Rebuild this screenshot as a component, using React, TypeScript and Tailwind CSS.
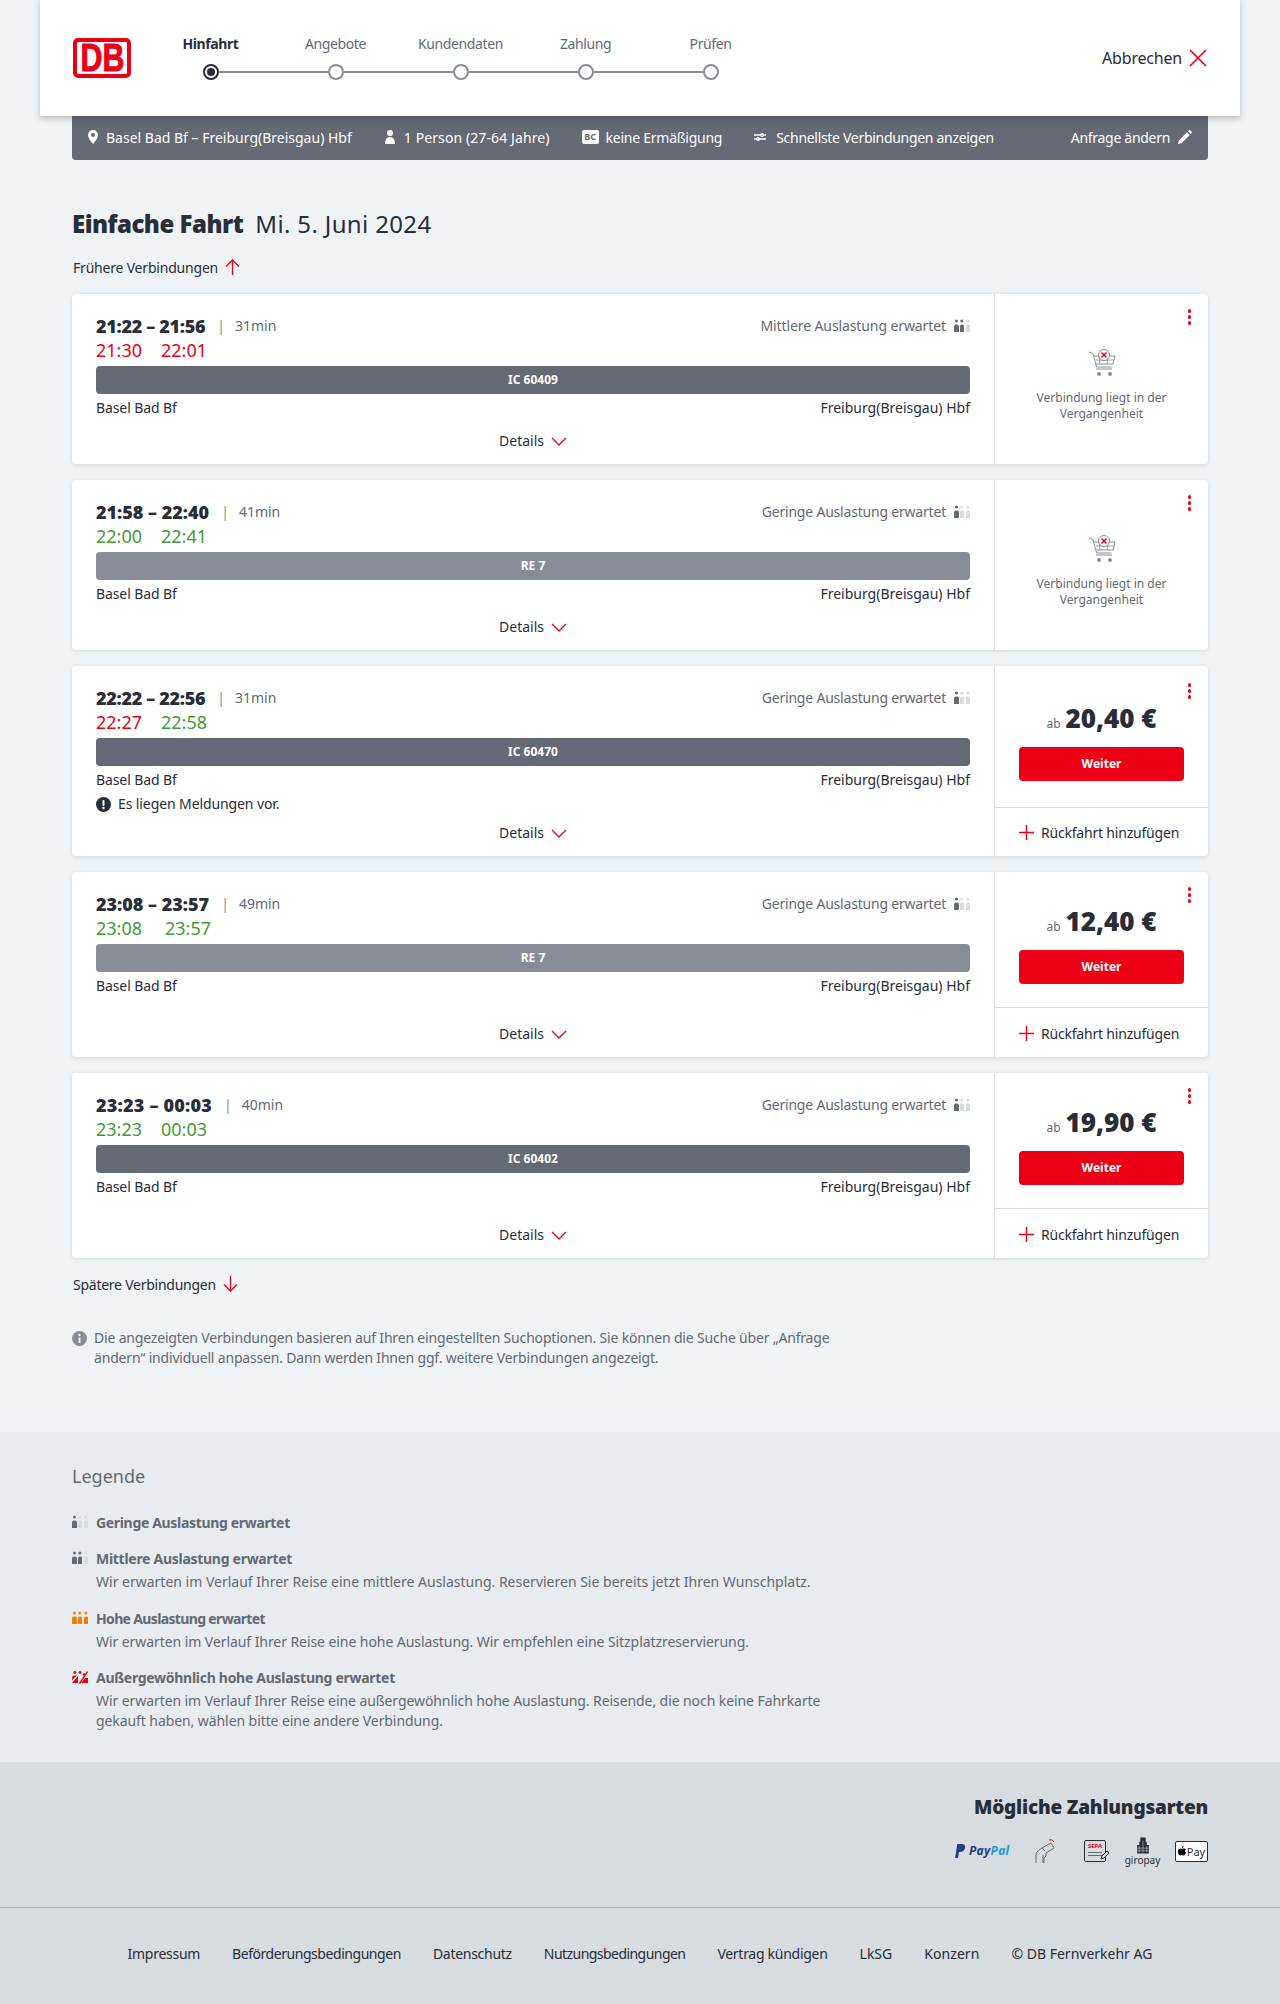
import React from "react";

const RED = "#ec0016";

function Occ({ level }: { level: 1 | 2 | 3 | 4 }) {
  const on = level === 3 ? "#f27e00" : "#646973";
  const off = "#d7dce1";
  const fills = level === 1 ? [on, off, off] : level === 2 ? [on, on, off] : [on, on, on];
  if (level === 4) {
    return (
      <svg width="16" height="14" viewBox="0 0 16 14" className="shrink-0">
        <circle cx="2.8" cy="2.5" r="1.4" fill={RED} />
        <path d="M0 13V8a2.5 2.5 0 0 1 2.500-2.500H5L0 10z M0 13l6-7 0 7z" fill={RED} />
        <path d="M7 13l8-12 1 1-8 12z" fill={RED} />
        <circle cx="8" cy="2.500" r="1.4" fill={RED} />
        <path d="M9 13l4-5h3v5z M12 6a1.4 1.4 0 1 1 .1 0z" fill={RED} />
      </svg>
    );
  }
  return (
    <svg width="16" height="14" viewBox="0 0 16 14" className="shrink-0">
      {[0, 6, 12].map((x, i) => (
        <g key={x} fill={fills[i]}>
          <circle cx={x + (i === 0 ? 2.5 : 1.8)} cy="2" r="1.5" />
          <path d={i === 0 ? "M0 13V7.5A2 2 0 0 1 2 5.5h1a2 2 0 0 1 2 2V13z" : `M${x} 13V7a1.5 1.5 0 0 1 1.5-1.5h1A1.5 1.5 0 0 1 ${x + 4} 7v6z`} />
        </g>
      ))}
    </svg>
  );
}

function Cart() {
  return (
    <svg width="28" height="28" viewBox="0 0 28 28" fill="none">
      <path d="M1 3l4 1.5 3.5 13.5h15" stroke="#878c96" strokeWidth="1" />
      <path d="M6 7h21l-2 8H8" stroke="#878c96" strokeWidth="1" />
      <path d="M8 11h18M11 7l1 8M20 7l-1 8" stroke="#878c96" strokeWidth="0.8" />
      <circle cx="16" cy="6" r="5.5" fill="#fff" stroke="#878c96" strokeWidth="1" />
      <path d="M13.5 3.5l5 5m0-5l-5 5" stroke={RED} strokeWidth="1.5" />
      <path d="M8 20h16" stroke="#afb4bb" strokeWidth="1.5" />
      <circle cx="11" cy="25" r="2" fill="#878c96" />
      <circle cx="22" cy="25" r="2" fill="#878c96" />
    </svg>
  );
}

function Chevron() {
  return (
    <svg width="16" height="9" viewBox="0 0 16 9" fill="none">
      <path d="M1 1l7 7 7-7" stroke={RED} strokeWidth="1.3" />
    </svg>
  );
}

function Dots({ top }: { top: string }) {
  return (
    <div className={`absolute right-[17px] ${top} flex flex-col gap-[2.5px]`}>
      <span className="w-[3.5px] h-[3.5px] rounded-full bg-[#ec0016]" />
      <span className="w-[3.5px] h-[3.5px] rounded-full bg-[#ec0016]" />
      <span className="w-[3.5px] h-[3.5px] rounded-full bg-[#ec0016]" />
    </div>
  );
}

type Conn = {
  time: string;
  track: string;
  dur: string;
  d1: string;
  d2: string;
  c1: string;
  c2: string;
  gap: string;
  load: string;
  loadTrack: string;
  level: 1 | 2;
  train: string;
  bar: string;
  msg?: boolean;
  price?: string;
  h: string;
  topH: string;
  btn: string;
  dots: string;
};

const conns: Conn[] = [
  { time: "21:22 – 21:56", track: "tracking-[-0.3px]", dur: "31min", d1: "21:30", d2: "22:01", c1: "text-[#ec0016]", c2: "text-[#ec0016]", gap: "gap-[19px]", load: "Mittlere Auslastung erwartet", loadTrack: "tracking-[-0.1px]", level: 2, train: "IC 60409", bar: "bg-[#646973]", h: "h-[170px]", topH: "", btn: "", dots: "top-[15px]" },
  { time: "21:58 – 22:40", track: "tracking-[0px]", dur: "41min", d1: "22:00", d2: "22:41", c1: "text-[#3f9c35]", c2: "text-[#3f9c35]", gap: "gap-[19px]", load: "Geringe Auslastung erwartet", loadTrack: "tracking-[-0.2px]", level: 1, train: "RE 7", bar: "bg-[#878c96]", h: "h-[170px]", topH: "", btn: "", dots: "top-[15px]" },
  { time: "22:22 – 22:56", track: "tracking-[-0.3px]", dur: "31min", d1: "22:27", d2: "22:58", c1: "text-[#ec0016]", c2: "text-[#3f9c35]", gap: "gap-[19px]", load: "Geringe Auslastung erwartet", loadTrack: "tracking-[-0.2px]", level: 1, train: "IC 60470", bar: "bg-[#646973]", msg: true, price: "20,40 €", h: "h-[190px]", topH: "h-[142px] pt-[34px]", btn: "mt-[11px]", dots: "top-[17px]" },
  { time: "23:08 – 23:57", track: "tracking-[0px]", dur: "49min", d1: "23:08", d2: "23:57", c1: "text-[#3f9c35]", c2: "text-[#3f9c35]", gap: "gap-[23px]", load: "Geringe Auslastung erwartet", loadTrack: "tracking-[-0.2px]", level: 1, train: "RE 7", bar: "bg-[#878c96]", price: "12,40 €", h: "h-[185px]", topH: "h-[136px] pt-[31px]", btn: "mt-[11px]", dots: "top-[15px]" },
  { time: "23:23 – 00:03", track: "tracking-[0.22px]", dur: "40min", d1: "23:23", d2: "00:03", c1: "text-[#3f9c35]", c2: "text-[#3f9c35]", gap: "gap-[19px]", load: "Geringe Auslastung erwartet", loadTrack: "tracking-[-0.2px]", level: 1, train: "IC 60402", bar: "bg-[#646973]", price: "19,90 €", h: "h-[185px]", topH: "h-[136px] pt-[31px]", btn: "mt-[11px]", dots: "top-[15px]" },
];

function Card({ c }: { c: Conn }) {
  return (
    <div className={`flex ${c.h} bg-white rounded shadow-[0_1px_4px_rgba(40,45,55,0.15)]`}>
      <div className="flex-1 flex flex-col px-6 pt-[20px] pb-[13px] border-r border-[#d7dce1]">
        <div className="flex items-center justify-between h-[24px]">
          <div className="flex items-center gap-[14px]">
            <span className={`text-[18px] font-black ${c.track} text-[#282d37]`}>{c.time}</span>
            <span className="text-[14px] text-[#878c96] ml-[-2px] mt-[-1px]">|</span>
            <span className="text-[14px] text-[#646973] ml-[-4px] mt-[-1px]">{c.dur}</span>
          </div>
          <div className={`flex items-center gap-[8px] text-[14px] ${c.loadTrack} text-[#646973]`}>
            <span className="mt-[-1px]">{c.load}</span>
            <Occ level={c.level} />
          </div>
        </div>
        <div className={`flex ${c.gap} text-[18px] leading-[24px]`}>
          <span className={c.c1}>{c.d1}</span>
          <span className={c.c2}>{c.d2}</span>
        </div>
        <div className={`${c.bar} h-[28px] rounded mt-[4px] flex items-center justify-center text-white text-[12px] font-bold`}>
          {c.train}
        </div>
        <div className="flex justify-between text-[14px] leading-[20px] mt-[4px] text-[#282d37]">
          <span className="tracking-[-0.1px]">Basel Bad Bf</span>
          <span>Freiburg(Breisgau) Hbf</span>
        </div>
        {c.msg && (
          <div className="flex items-center gap-[7px] text-[14px] leading-[20px] mt-[4px] text-[#282d37] tracking-[-0.1px]">
            <svg width="15" height="15" viewBox="0 0 15 15">
              <circle cx="7.5" cy="7.5" r="7.5" fill="#282d37" />
              <rect x="6.5" y="3" width="2" height="6" rx="1" fill="#fff" />
              <circle cx="7.5" cy="11" r="1.2" fill="#fff" />
            </svg>
            Es liegen Meldungen vor.
          </div>
        )}
        <div className="mt-auto flex items-center justify-center gap-[7px] text-[14px] leading-[20px] text-[#282d37]">
          Details
          <Chevron />
        </div>
      </div>
      <div className="w-[213px] relative flex flex-col shrink-0">
        <Dots top={c.dots} />
        {c.price ? (
          <>
            <div className={`${c.topH} px-[24px] border-b border-[#d7dce1]`}>
              <div className="flex items-baseline justify-center gap-[5px] h-[36px]">
                <span className="text-[12px] text-[#646973]">ab</span>
                <span className="text-[26px] leading-[36px] font-black text-[#282d37]">{c.price}</span>
              </div>
              <div className={`${c.btn} h-[34px] bg-[#ec0016] rounded flex items-center justify-center text-white text-[12px] font-bold`}>
                Weiter
              </div>
            </div>
            <div className="flex-1 flex items-center pl-[24px] gap-[7px] pt-[1px] text-[14px] tracking-[-0.2px] text-[#282d37]">
              <svg width="15" height="15" viewBox="0 0 15 15" fill="none">
                <path d="M7.5 0v15M0 7.5h15" stroke={RED} strokeWidth="1.4" />
              </svg>
              Rückfahrt hinzufügen
            </div>
          </>
        ) : (
          <div className="flex-1 flex flex-col items-center pt-[55px] text-center">
            <Cart />
            <p className="text-[12px] leading-[16px] text-[#646973] mt-[13px] px-[30px]">Verbindung liegt in der Vergangenheit</p>
          </div>
        )}
      </div>
    </div>
  );
}

function Step({ label, bold }: { label: string; bold?: boolean }) {
  return <div className={`w-[125px] text-center text-[14px] tracking-[-0.4px] ${bold ? "font-bold text-[#282d37]" : "text-[#646973]"}`}>{label}</div>;
}

function Dot() {
  return <span className="w-[16px] h-[16px] rounded-full border-2 border-[#878c96] bg-white shrink-0" />;
}

function Line() {
  return <span className="w-[109px] h-[2px] bg-[#878c96]" />;
}

function LegendItem({ level, title, track, desc, descTrack, cls }: { level: 1 | 2 | 3 | 4; title: string; track: string; desc?: React.ReactNode; descTrack?: string; cls?: string }) {
  return (
    <div className={cls}>
      <div className="flex items-center gap-[8px] h-[24px]">
        <Occ level={level} />
        <span className={`text-[14px] font-bold ${track} text-[#646973]`}>{title}</span>
      </div>
      {desc && <p className={`ml-[24px] text-[14px] leading-[20px] ${descTrack} text-[#646973] mt-[2px] w-[740px]`}>{desc}</p>}
    </div>
  );
}

export default function App() {
  return (
    <div className="min-h-[2004px] bg-[#f0f3f5] text-[#282d37] flex flex-col" style={{ fontFamily: '"Noto Sans", "Open Sans", sans-serif' }}>
      <header className="relative z-10 mx-[40px] h-[116px] bg-white shadow-[0_2px_6px_rgba(40,45,55,0.3)] flex items-center pl-[33px] pr-[33px]">
        <div className="w-[58px] h-[40px] border-[4px] border-[#ec0016] rounded-[5px] flex items-center justify-center overflow-hidden">
          <span className="text-[#ec0016] text-[38px] font-bold leading-none scale-x-[0.8] [-webkit-text-stroke:1px_#ec0016]" style={{ fontFamily: '"Liberation Sans", sans-serif' }}>DB</span>
        </div>
        <div className="ml-[17px] mt-[-4px] flex flex-col">
          <div className="flex">
            <Step label="Hinfahrt" bold />
            <Step label="Angebote" />
            <Step label="Kundendaten" />
            <Step label="Zahlung" />
            <Step label="Prüfen" />
          </div>
          <div className="flex items-center pl-[54.5px] mt-[10px]">
            <span className="w-[16px] h-[16px] rounded-full border-2 border-[#282d37] bg-white shrink-0 flex items-center justify-center">
              <span className="w-[8px] h-[8px] rounded-full bg-[#282d37]" />
            </span>
            <Line /><Dot /><Line /><Dot /><Line /><Dot /><Line /><Dot />
          </div>
        </div>
        <div className="ml-auto flex items-center gap-[7px] text-[16px] tracking-[-0.2px] text-[#282d37]">
          Abbrechen
          <svg width="18" height="18" viewBox="0 0 18 18" fill="none">
            <path d="M1 1l16 16M17 1L1 17" stroke={RED} strokeWidth="1.7" />
          </svg>
        </div>
      </header>

      <main className="px-[72px] flex-1">
        <div className="h-[44px] bg-[#646973] rounded-b flex items-center text-[14px] text-white pl-[15px] pr-[16px] pb-[2px]">
          <svg width="12" height="14" viewBox="0 0 12 14" fill="#fff" className="shrink-0">
            <path fillRule="evenodd" d="M6 0a5 5 0 0 1 5 5c0 3.2-3.4 7-5 9-1.6-2-5-5.800-5-9a5 5 0 0 1 5-5zm0 3a2 2 0 1 0 0 4 2 2 0 0 0 0-4z" />
          </svg>
          <span className="ml-[7px]">Basel Bad Bf – Freiburg(Breisgau) Hbf</span>
          <svg width="12" height="14" viewBox="0 0 12 14" fill="#fff" className="ml-[32px] shrink-0">
            <circle cx="6" cy="3" r="3" />
            <path d="M1 14c0-4 1.5-7 5-7s5 3 5 7z" />
          </svg>
          <span className="ml-[8px] tracking-[0.1px]">1 Person (27-64 Jahre)</span>
          <span className="ml-[32px] w-[17px] h-[14px] rounded-[2px] bg-white text-[#646973] text-[9px] font-bold leading-[14px] text-center shrink-0">BC</span>
          <span className="ml-[7px] tracking-[-0.25px]">keine Ermäßigung</span>
          <svg width="12" height="10" viewBox="0 0 12 10" fill="none" stroke="#fff" strokeWidth="1.4" className="ml-[32px] shrink-0">
            <path d="M0 3h12M0 7h12" />
            <circle cx="8" cy="3" r="1.3" fill="#646973" />
            <circle cx="4" cy="7" r="1.3" fill="#646973" />
          </svg>
          <span className="ml-[10px] tracking-[-0.3px]">Schnellste Verbindungen anzeigen</span>
          <span className="ml-auto tracking-[-0.3px]">Anfrage ändern</span>
          <svg width="14" height="14" viewBox="0 0 14 14" fill="#fff" className="ml-[8px] shrink-0">
            <path d="M0 14l.8-3.600L9 2.200 11.800 5l-8.200 8.200zM10 1.200l1-1a.8.8 0 0 1 1.100 0l1.700 1.700a.8.8 0 0 1 0 1.100l-1 1z" />
          </svg>
        </div>

        <h1 className="mt-[47px] flex items-center h-[34px] text-[24px] leading-[34px] gap-[12px]">
          <span className="font-black tracking-[-0.5px]">Einfache Fahrt</span>
          <span className="font-normal tracking-[0.35px]">Mi. 5. Juni 2024</span>
        </h1>
        <div className="mt-[14px] h-[24px] flex items-center gap-[7px] pl-[1px] text-[14px] tracking-[-0.2px]">
          Frühere Verbindungen
          <svg width="15" height="16" viewBox="0 0 15 16" fill="none">
            <path d="M7.5 16V1M1 7.5L7.5 1 14 7.5" stroke={RED} strokeWidth="1.3" />
          </svg>
        </div>

        <div className="mt-[15px] flex flex-col gap-[16px]">
          {conns.map((c) => (
            <Card key={c.time} c={c} />
          ))}
        </div>

        <div className="mt-[14px] h-[24px] flex items-center gap-[7px] pl-[1px] text-[14px] tracking-[-0.25px]">
          Spätere Verbindungen
          <svg width="15" height="16" viewBox="0 0 15 16" fill="none">
            <path d="M7.5 0v15M1 8.5L7.5 15 14 8.5" stroke={RED} strokeWidth="1.3" />
          </svg>
        </div>

        <div className="mt-[32px] flex gap-[7px] text-[14px] leading-[20px] tracking-[-0.18px] text-[#646973] w-[780px]">
          <svg width="15" height="15" viewBox="0 0 15 15" className="shrink-0 mt-[3px]">
            <circle cx="7.5" cy="7.5" r="7.5" fill="#878c96" />
            <rect x="6.5" y="6.5" width="2" height="5.5" rx="0.5" fill="#f0f3f5" />
            <circle cx="7.5" cy="4" r="1.2" fill="#f0f3f5" />
          </svg>
          <p>Die angezeigten Verbindungen basieren auf Ihren eingestellten Suchoptionen. Sie können die Suche über „Anfrage ändern“ individuell anpassen. Dann werden Ihnen ggf. weitere Verbindungen angezeigt.</p>
        </div>
      </main>

      <section className="bg-[#e8ebf0] h-[330px] px-[72px] pt-[30px]">
        <h2 className="text-[18px] leading-[28px] text-[#646973]">Legende</h2>
        <div className="mt-[20px] flex flex-col gap-[14px]">
          <LegendItem cls="mb-[-2px]" level={1} track="tracking-[-0.33px]" title="Geringe Auslastung erwartet" />
          <LegendItem level={2} track="tracking-[-0.28px]" descTrack="tracking-[0px]" title="Mittlere Auslastung erwartet" desc="Wir erwarten im Verlauf Ihrer Reise eine mittlere Auslastung. Reservieren Sie bereits jetzt Ihren Wunschplatz." />
          <LegendItem level={3} track="tracking-[-0.65px]" descTrack="tracking-[-0.07px]" title="Hohe Auslastung erwartet" desc="Wir erwarten im Verlauf Ihrer Reise eine hohe Auslastung. Wir empfehlen eine Sitzplatzreservierung." />
          <LegendItem cls="mt-[-1px]" level={4} track="tracking-[-0.28px]" descTrack="tracking-[-0.08px]" title="Außergewöhnlich hohe Auslastung erwartet" desc="Wir erwarten im Verlauf Ihrer Reise eine außergewöhnlich hohe Auslastung. Reisende, die noch keine Fahrkarte gekauft haben, wählen bitte eine andere Verbindung." />
        </div>
      </section>

      <section className="bg-[#d7dce1] h-[146px] px-[72px] pt-[29px] flex flex-col items-end border-b border-[#afb4bb]">
        <h2 className="text-[19px] leading-[32px] font-black tracking-[-0.2px] text-[#282d37]">Mögliche Zahlungsarten</h2>
        <div className="mt-[12px] flex items-center h-[32px]">
          <div className="flex items-center gap-[3px] w-[57px]">
            <svg width="11" height="14" viewBox="0 0 10 13"><path d="M2 0h4c3 0 4 2 3 4.500C8 7 6.500 7.500 4.500 7.500H3.500L2.700 13H0z" fill="#253b80" /></svg>
            <span className="text-[12px] font-bold italic tracking-[0.3px] text-[#253b80] leading-none">Pay<span className="text-[#179bd7]">Pal</span></span>
          </div>
          <svg width="22" height="26" viewBox="0 0 22 26" fill="none" stroke="#646973" strokeWidth="1" className="ml-[22px]">
            <path d="M2 25v-8c0-3 3-5 6-7l9-5 3 5-8 5v3l-2 2v5M9 17v8M8 10l3 3" />
            <path d="M15 2a4 4 0 0 1 5 2" stroke={RED} />
          </svg>
          <div className="ml-[28px] w-[22px] h-[22px] border border-[#282d37] rounded-[2px] relative flex flex-col items-center">
            <span className="text-[6px] font-bold text-[#ec0016] leading-[10px]">SEPA</span>
            <span className="w-[14px] h-px bg-[#646973] mt-[1px]" />
            <span className="w-[14px] h-px bg-[#646973] mt-[2px]" />
            <svg width="10" height="10" viewBox="0 0 10 10" className="absolute right-[-5px] bottom-[1px]" fill="#d7dce1" stroke="#282d37">
              <path d="M1 9l1-3 5-5 2 2-5 5z" />
            </svg>
          </div>
          <div className="ml-[20px] w-[33px] flex flex-col items-center">
            <svg width="16" height="17" viewBox="0 0 15 15" fill="#282d37">
              <path d="M5 0h5v4h1v3h2v8H2V7h2V4h1z" />
              <path d="M4 8v6M7.500 3v11M11 8v6M2 10h11M2 12.500h11" stroke="#d7dce1" strokeWidth="0.5" />
            </svg>
            <span className="text-[10px] leading-[12px] text-[#282d37]">giropay</span>
          </div>
          <div className="ml-[16px] w-[33px] h-[21px] bg-white border border-[#282d37] rounded-[2px] flex items-center justify-center text-[11px] text-[#282d37] leading-none">
            <svg width="8" height="10" viewBox="0 0 9 11" fill="#000" className="mr-[1px]">
              <path d="M6.500 0c.1 1-.9 2.300-2.100 2.200C4.200 1.200 5.300.1 6.500 0zM8.800 3.700c-1.400.9-1.200 3 .2 3.600-.5 1.400-1.500 3.300-2.700 3.300-.7 0-1.100-.5-1.900-.5s-1.300.5-1.900.5C1.300 10.600 0 8 0 6c0-2.200 1.400-3.400 2.700-3.400.8 0 1.400.5 1.900.5s1.200-.6 2.200-.5c.9 0 1.600.4 2 1.100z" />
            </svg>
            Pay
          </div>
        </div>
      </section>

      <footer className="bg-[#d7dce1] h-[96px] pb-[5px] flex items-center justify-center gap-[32px] text-[14px] tracking-[-0.28px] text-[#282d37]">
        <span>Impressum</span>
        <span className="tracking-[-0.45px]">Beförderungsbedingungen</span>
        <span>Datenschutz</span>
        <span className="tracking-[-0.55px]">Nutzungsbedingungen</span>
        <span>Vertrag kündigen</span>
        <span className="tracking-[0px]">LkSG</span>
        <span className="tracking-[0.07px]">Konzern</span>
        <span className="tracking-[0px]">© DB Fernverkehr AG</span>
      </footer>
    </div>
  );
}
